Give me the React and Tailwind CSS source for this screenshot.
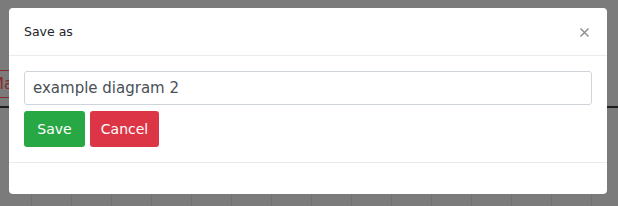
import { useState } from "react";

export default function App() {
  const [name, setName] = useState("example diagram 2");

  return (
    <div className="relative w-[618px] h-[206px] overflow-hidden bg-[#7b7b7b] font-['DejaVu_Sans',sans-serif]">
      {/* canvas grid behind the overlay */}
      <div className="absolute inset-0 top-[8px] bg-[image:linear-gradient(to_right,#727272_1px,transparent_1px)] bg-[size:40px_100%] bg-[position:31px_0]" />
      <div className="absolute left-0 top-[70px] w-[40px] h-[28px] border border-[#8a2a2a] text-[#8a2a2a] text-[15px] leading-[26px] -ml-[10px]">
        Ma
      </div>
      <div className="absolute left-0 right-0 top-[106px] h-[2px] bg-[#1d1d1d]" />

      {/* modal */}
      <div className="relative ml-[9px] mt-[8px] w-[598px] h-[186px] bg-white rounded-[4px] flex flex-col">
        <div className="h-[48px] border-b border-[#e9ecef] flex items-center justify-between px-[15px]">
          <span className="text-[12.5px] text-[#212529] pt-[1px]">Save as</span>
          <svg width="11" height="11" viewBox="0 0 11 11" className="mr-[2px] mt-[1px]">
            <path d="M1.5 1.5 L9.5 9.5 M9.5 1.5 L1.5 9.5" stroke="#8f8f8f" strokeWidth="1.5" />
          </svg>
        </div>
        <div className="px-[15px] pt-[15px] pb-[15px] border-b border-[#e9ecef] flex flex-col gap-[6px]">
          <input
            value={name}
            onChange={(e) => setName(e.target.value)}
            className="w-full h-[34px] border border-[#ced4da] rounded-[3px] px-[8px] text-[15px] text-[#495057] outline-none font-['DejaVu_Sans',sans-serif]"
          />
          <div className="flex gap-[5px]">
            <button className="h-[36px] w-[61px] rounded-[3px] bg-[#28a745] text-white text-[14px]">
              Save
            </button>
            <button className="h-[36px] w-[69px] rounded-[3px] bg-[#dc3545] text-white text-[14px]">
              Cancel
            </button>
          </div>
        </div>
        <div className="flex-1" />
      </div>
    </div>
  );
}
